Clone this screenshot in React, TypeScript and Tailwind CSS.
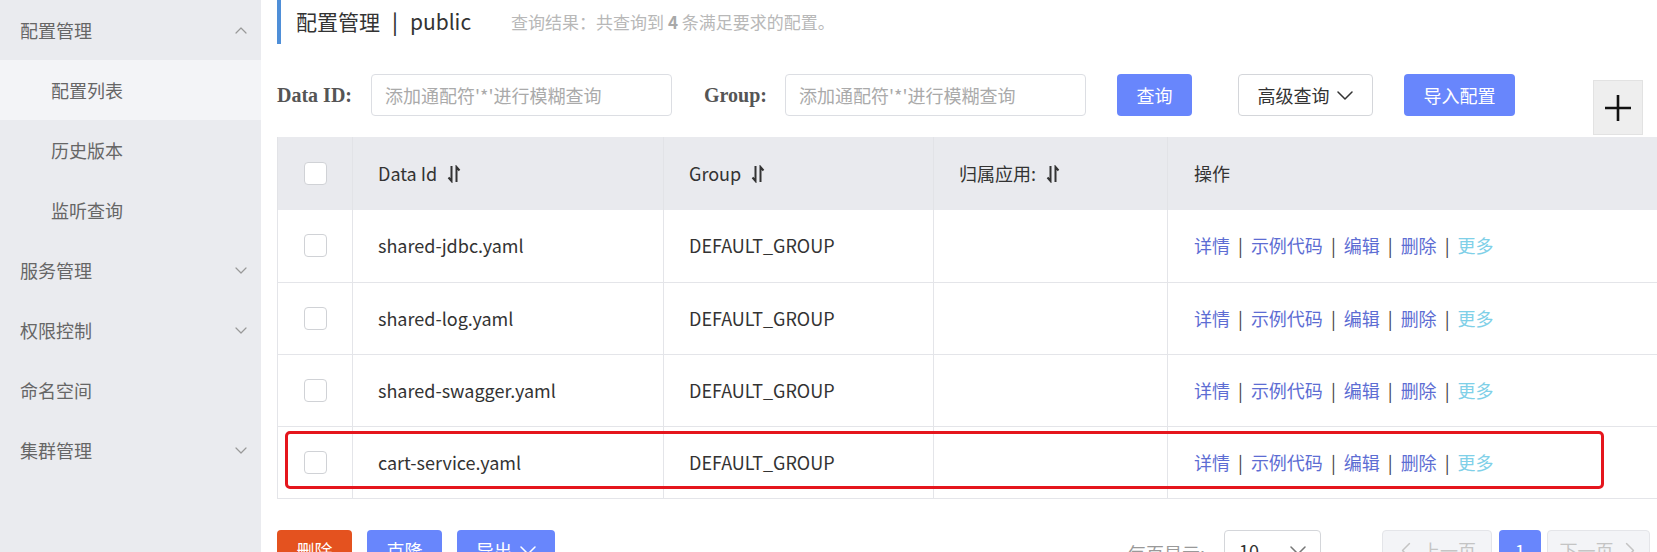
import React from 'react';

type NavItem = { label: string; level: 0 | 1; chevron?: 'up' | 'down'; active?: boolean };

const NAV: NavItem[] = [
  { label: '配置管理', level: 0, chevron: 'up' },
  { label: '配置列表', level: 1, active: true },
  { label: '历史版本', level: 1 },
  { label: '监听查询', level: 1 },
  { label: '服务管理', level: 0, chevron: 'down' },
  { label: '权限控制', level: 0, chevron: 'down' },
  { label: '命名空间', level: 0 },
  { label: '集群管理', level: 0, chevron: 'down' },
];

const ROWS = ['shared-jdbc.yaml', 'shared-log.yaml', 'shared-swagger.yaml', 'cart-service.yaml'];

const Chevron = ({ dir, className = '', color = '#999', w = 12, h = 7, sw = 1.2 }: { dir: 'up' | 'down'; className?: string; color?: string; w?: number; h?: number; sw?: number }) => (
  <svg className={className} width={w} height={h} viewBox={`0 0 ${w} ${h}`} fill="none" stroke={color} strokeWidth={sw} strokeLinecap="round" strokeLinejoin="round">
    {dir === 'down' ? (
      <path d={`M1 1 L${w / 2} ${h - 1} L${w - 1} 1`} />
    ) : (
      <path d={`M1 ${h - 1} L${w / 2} 1 L${w - 1} ${h - 1}`} />
    )}
  </svg>
);

// the little "⇃↾" sort mark next to the column titles
const SortIcon = () => (
  <svg className="ml-[10px]" width="14" height="18" viewBox="0 0 14 18" fill="none" stroke="#333" strokeWidth="2">
    <path d="M4.5 1 V16 L1.5 12.5" />
    <path d="M9.5 17 V2 L12.5 5.5" />
  </svg>
);

const Checkbox = () => (
  <div className="mx-auto h-[23px] w-[23px] rounded-[4px] border border-[#d0d2d6] bg-white" />
);

const Sidebar = () => (
  <div className="w-[261px] shrink-0 bg-[#eaebef]">
    {NAV.map((item) => (
      <div
        key={item.label}
        className={`flex h-[60px] items-center justify-between pr-[14px] text-[18px] text-[#666] ${
          item.level === 0 ? 'pl-[20px]' : 'pl-[51px]'
        } ${item.active ? 'bg-[#f3f4f7]' : ''}`}
      >
        <span>{item.label}</span>
        {item.chevron && <Chevron dir={item.chevron} />}
      </div>
    ))}
  </div>
);

const Actions = () => {
  const links = ['详情', '示例代码', '编辑', '删除'];
  return (
    <div className="flex items-center text-[18px]">
      {links.map((l) => (
        <React.Fragment key={l}>
          <span className="text-[#5d6dd3]">{l}</span>
          <span className="px-[8px] text-[#444]">|</span>
        </React.Fragment>
      ))}
      <span className="text-[#7fd0e8]">更多</span>
    </div>
  );
};

export default function App() {
  return (
    <div className="flex h-screen overflow-hidden bg-white [font-family:'Noto_Sans_CJK_SC','Noto_Sans',sans-serif] text-[#333]">
      <Sidebar />

      <div className="flex min-w-0 flex-1 flex-col pl-[16px]">
        {/* title */}
        <div className="flex h-[44px] shrink-0 items-center border-l-[4px] border-[#4f8fd8] pl-[15px]">
          <span className="text-[21px] text-[#333]">
            配置管理<span className="mx-[12px] font-medium">|</span>public
          </span>
          <span className="ml-[40px] text-[17px] text-[#b8b8b8]">
            查询结果：共查询到 <b className="text-[#a8a8a8]">4</b> 条满足要求的配置。
          </span>
        </div>

        {/* filters */}
        <div className="mt-[30px] flex shrink-0 items-start pr-[14px]">
          <span className="flex h-[42px] items-center text-[20px] font-bold text-[#555] [font-family:'Liberation_Serif',serif]">Data ID:</span>
          <input
            placeholder="添加通配符'*'进行模糊查询"
            className="ml-[19px] h-[42px] w-[301px] rounded-[4px] border border-[#dcdee3] px-[13px] text-[18px] outline-none placeholder:text-[#aaa]"
          />
          <span className="ml-[32px] flex h-[42px] items-center text-[20px] font-bold text-[#555] [font-family:'Liberation_Serif',serif]">Group:</span>
          <input
            placeholder="添加通配符'*'进行模糊查询"
            className="ml-[18px] h-[42px] w-[301px] rounded-[4px] border border-[#dcdee3] px-[13px] text-[18px] outline-none placeholder:text-[#aaa]"
          />
          <button className="ml-[31px] h-[42px] w-[75px] rounded-[4px] bg-[#6886fc] text-[18px] text-white">查询</button>
          <button className="ml-[46px] flex h-[42px] w-[135px] items-center justify-center gap-[8px] rounded-[4px] border border-[#d4d6da] bg-white text-[18px] text-[#333]">
            高级查询
            <Chevron dir="down" color="#333" w={16} h={9} sw={1.5} />
          </button>
          <button className="ml-[31px] h-[42px] w-[111px] rounded-[4px] bg-[#6886fc] text-[18px] text-white">导入配置</button>
          <div className="ml-auto mt-[6px] flex h-[55px] w-[50px] items-center justify-center border border-[#e2e2e2] bg-[#eeeeee]">
            <svg width="30" height="30" viewBox="0 0 30 30" stroke="#111" strokeWidth="2.6">
              <path d="M15 2 V28 M2 15 H28" />
            </svg>
          </div>
        </div>

        {/* table */}
        <div className="relative mt-[2px] shrink-0">
          <table className="w-full table-fixed border-collapse text-[18px] text-[#333]">
            <colgroup>
              <col className="w-[75px]" />
              <col className="w-[311px]" />
              <col className="w-[270px]" />
              <col className="w-[234px]" />
              <col />
            </colgroup>
            <thead>
              <tr className="h-[73px] bg-[#e9eaee]">
                <th className="border-l border-r border-[#e2e3e7]">
                  <Checkbox />
                </th>
                {['Data Id', 'Group', '归属应用:'].map((h) => (
                  <th key={h} className="border-r border-[#e2e3e7] pl-[25px] text-left font-normal">
                    <div className="flex items-center">
                      {h}
                      <SortIcon />
                    </div>
                  </th>
                ))}
                <th className="pl-[26px] text-left font-normal">操作</th>
              </tr>
            </thead>
            <tbody>
              {ROWS.map((r) => (
                <tr key={r} className="h-[72px] border-b border-[#e4e5e9]">
                  <td className="border-l border-r border-[#e4e5e9]">
                    <Checkbox />
                  </td>
                  <td className="border-r border-[#e4e5e9] pl-[25px]">{r}</td>
                  <td className="border-r border-[#e4e5e9] pl-[25px]">DEFAULT_GROUP</td>
                  <td className="border-r border-[#e4e5e9]" />
                  <td className="pl-[26px]">
                    <Actions />
                  </td>
                </tr>
              ))}
            </tbody>
          </table>
          {/* red annotation round the last row */}
          <div className="pointer-events-none absolute left-[8px] top-[294px] h-[58px] w-[1319px] rounded-[5px] border-[3px] border-[#e5161d]" />
        </div>

        {/* footer */}
        <div className="mt-[31px] flex shrink-0 items-start justify-between pr-[7px]">
          <div className="flex gap-[15px]">
            <button className="h-[42px] w-[75px] rounded-[4px] bg-[#e4521f] text-[18px] text-white">删除</button>
            <button className="h-[42px] w-[75px] rounded-[4px] bg-[#6886fc] text-[18px] text-white">克隆</button>
            <button className="flex h-[42px] w-[98px] items-center justify-center gap-[8px] rounded-[4px] bg-[#6886fc] text-[18px] text-white">
              导出
              <Chevron dir="down" color="#fff" w={16} h={9} sw={1.5} />
            </button>
          </div>
          <div className="flex items-start">
            <span className="mt-[10px] text-[18px] text-[#999]">每页显示:</span>
            <div className="ml-[19px] flex h-[42px] w-[97px] items-center justify-between rounded-[4px] border border-[#d4d6da] px-[14px] text-[18px]">
              10
              <Chevron dir="down" color="#777" w={16} h={9} sw={1.5} />
            </div>
            <div className="ml-[61px] flex h-[42px] w-[110px] items-center justify-center gap-[8px] rounded-[4px] border border-[#e4e5e9] bg-[#f3f4f7] text-[18px] text-[#c4c4c4]">
              <Chevron dir="down" className="rotate-90" color="#c4c4c4" w={16} h={9} sw={1.5} />
              上一页
            </div>
            <div className="ml-[7px] flex h-[42px] w-[42px] items-center justify-center rounded-[4px] bg-[#6886fc] text-[18px] text-white">1</div>
            <div className="ml-[6px] flex h-[42px] w-[103px] items-center justify-center gap-[8px] rounded-[4px] border border-[#e4e5e9] bg-[#f3f4f7] text-[18px] text-[#c4c4c4]">
              下一页
              <Chevron dir="down" className="-rotate-90" color="#c4c4c4" w={16} h={9} sw={1.5} />
            </div>
          </div>
        </div>
      </div>
    </div>
  );
}
